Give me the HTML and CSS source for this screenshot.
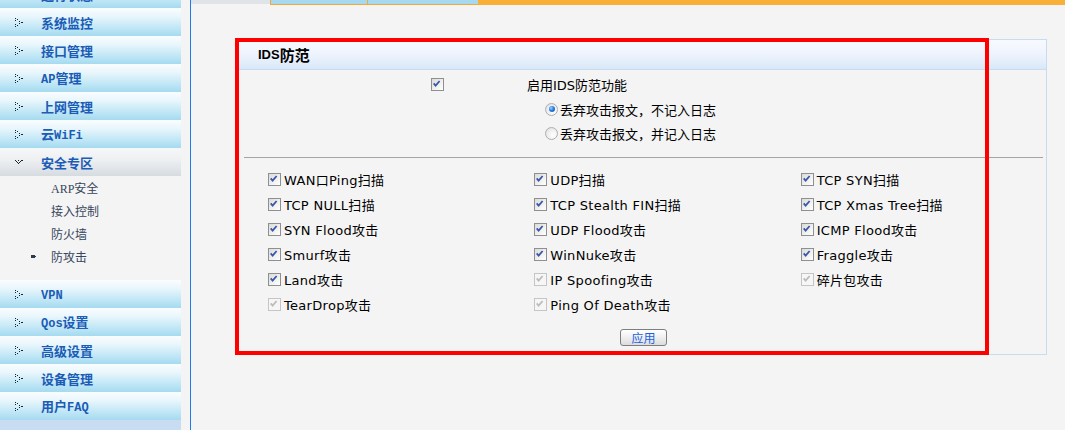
FILE: index.html
```html
<!DOCTYPE html>
<html lang="zh-CN">
<head>
<meta charset="utf-8">
<title>IDS防范</title>
<link rel="stylesheet" href="styles.css">
</head>
<body>
<div class="page">
  <aside class="side">
    <nav class="menu">
      <div class="item"><i class="ico"><svg width="9" height="9" viewBox="0 0 9 9"><g fill="#1d2230"><rect x="0" y="0" width="1" height="1"/><rect x="2" y="1" width="1" height="1"/><rect x="0" y="2" width="1" height="1"/><rect x="4" y="3" width="1" height="1"/><rect x="6" y="4" width="2" height="1"/><rect x="4" y="5" width="1" height="1"/><rect x="0" y="6" width="1" height="1"/><rect x="2" y="7" width="1" height="1"/><rect x="0" y="8" width="1" height="1"/></g></svg></i><span>运行状态</span></div>
      <div class="item"><i class="ico"><svg width="9" height="9" viewBox="0 0 9 9"><g fill="#1d2230"><rect x="0" y="0" width="1" height="1"/><rect x="2" y="1" width="1" height="1"/><rect x="0" y="2" width="1" height="1"/><rect x="4" y="3" width="1" height="1"/><rect x="6" y="4" width="2" height="1"/><rect x="4" y="5" width="1" height="1"/><rect x="0" y="6" width="1" height="1"/><rect x="2" y="7" width="1" height="1"/><rect x="0" y="8" width="1" height="1"/></g></svg></i><span>系统监控</span></div>
      <div class="item"><i class="ico"><svg width="9" height="9" viewBox="0 0 9 9"><g fill="#1d2230"><rect x="0" y="0" width="1" height="1"/><rect x="2" y="1" width="1" height="1"/><rect x="0" y="2" width="1" height="1"/><rect x="4" y="3" width="1" height="1"/><rect x="6" y="4" width="2" height="1"/><rect x="4" y="5" width="1" height="1"/><rect x="0" y="6" width="1" height="1"/><rect x="2" y="7" width="1" height="1"/><rect x="0" y="8" width="1" height="1"/></g></svg></i><span>接口管理</span></div>
      <div class="item"><i class="ico"><svg width="9" height="9" viewBox="0 0 9 9"><g fill="#1d2230"><rect x="0" y="0" width="1" height="1"/><rect x="2" y="1" width="1" height="1"/><rect x="0" y="2" width="1" height="1"/><rect x="4" y="3" width="1" height="1"/><rect x="6" y="4" width="2" height="1"/><rect x="4" y="5" width="1" height="1"/><rect x="0" y="6" width="1" height="1"/><rect x="2" y="7" width="1" height="1"/><rect x="0" y="8" width="1" height="1"/></g></svg></i><span><span class="en">AP</span>管理</span></div>
      <div class="item"><i class="ico"><svg width="9" height="9" viewBox="0 0 9 9"><g fill="#1d2230"><rect x="0" y="0" width="1" height="1"/><rect x="2" y="1" width="1" height="1"/><rect x="0" y="2" width="1" height="1"/><rect x="4" y="3" width="1" height="1"/><rect x="6" y="4" width="2" height="1"/><rect x="4" y="5" width="1" height="1"/><rect x="0" y="6" width="1" height="1"/><rect x="2" y="7" width="1" height="1"/><rect x="0" y="8" width="1" height="1"/></g></svg></i><span>上网管理</span></div>
      <div class="item"><i class="ico"><svg width="9" height="9" viewBox="0 0 9 9"><g fill="#1d2230"><rect x="0" y="0" width="1" height="1"/><rect x="2" y="1" width="1" height="1"/><rect x="0" y="2" width="1" height="1"/><rect x="4" y="3" width="1" height="1"/><rect x="6" y="4" width="2" height="1"/><rect x="4" y="5" width="1" height="1"/><rect x="0" y="6" width="1" height="1"/><rect x="2" y="7" width="1" height="1"/><rect x="0" y="8" width="1" height="1"/></g></svg></i><span>云<span class="en">WiFi</span></span></div>
      <div class="item active"><i class="ico"><svg width="9" height="5" viewBox="0 0 9 5"><g fill="#1d2230"><rect x="0" y="0" width="1" height="1"/><rect x="3" y="0" width="1" height="1"/><rect x="6" y="0" width="2" height="1"/><rect x="1" y="1" width="1" height="1"/><rect x="5" y="1" width="1" height="1"/><rect x="2" y="2" width="1" height="1"/><rect x="4" y="2" width="1" height="1"/><rect x="3" y="3" width="1" height="1"/></g></svg></i><span>安全专区</span></div>
      <ul class="sub">
        <li><i class="mk"></i><span><span class="sen">ARP</span>安全</span></li>
        <li><i class="mk"></i><span>接入控制</span></li>
        <li><i class="mk"></i><span>防火墙</span></li>
        <li class="cur"><i class="mk"><svg width="6" height="5" viewBox="0 0 6 5"><g fill="#2c3a52"><rect x="0" y="1" width="2" height="3"/><rect x="2" y="1" width="2" height="3"/><rect x="4" y="2" width="1" height="1"/></g></svg></i><span>防攻击</span></li>
      </ul>
      <div class="item"><i class="ico"><svg width="9" height="9" viewBox="0 0 9 9"><g fill="#1d2230"><rect x="0" y="0" width="1" height="1"/><rect x="2" y="1" width="1" height="1"/><rect x="0" y="2" width="1" height="1"/><rect x="4" y="3" width="1" height="1"/><rect x="6" y="4" width="2" height="1"/><rect x="4" y="5" width="1" height="1"/><rect x="0" y="6" width="1" height="1"/><rect x="2" y="7" width="1" height="1"/><rect x="0" y="8" width="1" height="1"/></g></svg></i><span><span class="en">VPN</span></span></div>
      <div class="item"><i class="ico"><svg width="9" height="9" viewBox="0 0 9 9"><g fill="#1d2230"><rect x="0" y="0" width="1" height="1"/><rect x="2" y="1" width="1" height="1"/><rect x="0" y="2" width="1" height="1"/><rect x="4" y="3" width="1" height="1"/><rect x="6" y="4" width="2" height="1"/><rect x="4" y="5" width="1" height="1"/><rect x="0" y="6" width="1" height="1"/><rect x="2" y="7" width="1" height="1"/><rect x="0" y="8" width="1" height="1"/></g></svg></i><span><span class="en">Qos</span>设置</span></div>
      <div class="item"><i class="ico"><svg width="9" height="9" viewBox="0 0 9 9"><g fill="#1d2230"><rect x="0" y="0" width="1" height="1"/><rect x="2" y="1" width="1" height="1"/><rect x="0" y="2" width="1" height="1"/><rect x="4" y="3" width="1" height="1"/><rect x="6" y="4" width="2" height="1"/><rect x="4" y="5" width="1" height="1"/><rect x="0" y="6" width="1" height="1"/><rect x="2" y="7" width="1" height="1"/><rect x="0" y="8" width="1" height="1"/></g></svg></i><span>高级设置</span></div>
      <div class="item"><i class="ico"><svg width="9" height="9" viewBox="0 0 9 9"><g fill="#1d2230"><rect x="0" y="0" width="1" height="1"/><rect x="2" y="1" width="1" height="1"/><rect x="0" y="2" width="1" height="1"/><rect x="4" y="3" width="1" height="1"/><rect x="6" y="4" width="2" height="1"/><rect x="4" y="5" width="1" height="1"/><rect x="0" y="6" width="1" height="1"/><rect x="2" y="7" width="1" height="1"/><rect x="0" y="8" width="1" height="1"/></g></svg></i><span>设备管理</span></div>
      <div class="item"><i class="ico"><svg width="9" height="9" viewBox="0 0 9 9"><g fill="#1d2230"><rect x="0" y="0" width="1" height="1"/><rect x="2" y="1" width="1" height="1"/><rect x="0" y="2" width="1" height="1"/><rect x="4" y="3" width="1" height="1"/><rect x="6" y="4" width="2" height="1"/><rect x="4" y="5" width="1" height="1"/><rect x="0" y="6" width="1" height="1"/><rect x="2" y="7" width="1" height="1"/><rect x="0" y="8" width="1" height="1"/></g></svg></i><span>用户<span class="en">FAQ</span></span></div>
    </nav>
  </aside>

  <main class="main">
    <div class="tabs">
      <span class="tab-gap"></span>
      <span class="tab t1"></span>
      <span class="tab t2"></span>
      <span class="tab-rest"></span>
    </div>

    <section class="panel">
      <header class="panel-head"><span class="head-en">IDS</span>防范</header>
      <div class="panel-body">
        <div class="enable-row">
          <span class="cb"><svg viewBox="0 0 13 13"><path d="M3 6.2 5.3 8.8 10 3.4"/></svg></span>
          <span class="enable-label">启用IDS防范功能</span>
        </div>
        <div class="radio-row"><span class="rd on"></span><span>丢弃攻击报文，不记入日志</span></div>
        <div class="radio-row"><span class="rd"></span><span>丢弃攻击报文，并记入日志</span></div>

        <hr class="sep">

        <div class="grid">
          <label class="opt"><span class="cb"><svg viewBox="0 0 13 13"><path d="M3 6.2 5.3 8.8 10 3.4"/></svg></span>WAN口Ping扫描</label>
          <label class="opt"><span class="cb"><svg viewBox="0 0 13 13"><path d="M3 6.2 5.3 8.8 10 3.4"/></svg></span>UDP扫描</label>
          <label class="opt"><span class="cb"><svg viewBox="0 0 13 13"><path d="M3 6.2 5.3 8.8 10 3.4"/></svg></span>TCP SYN扫描</label>

          <label class="opt"><span class="cb"><svg viewBox="0 0 13 13"><path d="M3 6.2 5.3 8.8 10 3.4"/></svg></span>TCP NULL扫描</label>
          <label class="opt"><span class="cb"><svg viewBox="0 0 13 13"><path d="M3 6.2 5.3 8.8 10 3.4"/></svg></span>TCP Stealth FIN扫描</label>
          <label class="opt"><span class="cb"><svg viewBox="0 0 13 13"><path d="M3 6.2 5.3 8.8 10 3.4"/></svg></span>TCP Xmas Tree扫描</label>

          <label class="opt"><span class="cb"><svg viewBox="0 0 13 13"><path d="M3 6.2 5.3 8.8 10 3.4"/></svg></span>SYN Flood攻击</label>
          <label class="opt"><span class="cb"><svg viewBox="0 0 13 13"><path d="M3 6.2 5.3 8.8 10 3.4"/></svg></span>UDP Flood攻击</label>
          <label class="opt"><span class="cb"><svg viewBox="0 0 13 13"><path d="M3 6.2 5.3 8.8 10 3.4"/></svg></span>ICMP Flood攻击</label>

          <label class="opt"><span class="cb"><svg viewBox="0 0 13 13"><path d="M3 6.2 5.3 8.8 10 3.4"/></svg></span>Smurf攻击</label>
          <label class="opt"><span class="cb"><svg viewBox="0 0 13 13"><path d="M3 6.2 5.3 8.8 10 3.4"/></svg></span>WinNuke攻击</label>
          <label class="opt"><span class="cb"><svg viewBox="0 0 13 13"><path d="M3 6.2 5.3 8.8 10 3.4"/></svg></span>Fraggle攻击</label>

          <label class="opt"><span class="cb"><svg viewBox="0 0 13 13"><path d="M3 6.2 5.3 8.8 10 3.4"/></svg></span>Land攻击</label>
          <label class="opt"><span class="cb dis"><svg viewBox="0 0 13 13"><path d="M3 6.2 5.3 8.8 10 3.4"/></svg></span>IP Spoofing攻击</label>
          <label class="opt"><span class="cb dis"><svg viewBox="0 0 13 13"><path d="M3 6.2 5.3 8.8 10 3.4"/></svg></span>碎片包攻击</label>

          <label class="opt"><span class="cb dis"><svg viewBox="0 0 13 13"><path d="M3 6.2 5.3 8.8 10 3.4"/></svg></span>TearDrop攻击</label>
          <label class="opt"><span class="cb dis"><svg viewBox="0 0 13 13"><path d="M3 6.2 5.3 8.8 10 3.4"/></svg></span>Ping Of Death攻击</label>
        </div>

        <div class="actions"><button class="btn" type="button">应用</button></div>
      </div>
    </section>

    <div class="mark"></div>
  </main>
</div>
</body>
</html>
```

FILE: styles.css
```css
* { box-sizing: border-box; }

html, body {
  margin: 0;
  padding: 0;
  height: 100%;
  overflow: hidden;
  background: #f4f4f4;
}

.page {
  display: flex;
  height: 100%;
}

/* ---------- sidebar ---------- */
.side {
  width: 191px;
  flex: none;
  border-right: 1px solid #1a7cf2;
  background: #f4f4f4;
}

.menu {
  width: 181px;
  margin-top: -20px;
  height: calc(100% + 20px);
  background: #c8ddf1;
  font: bold 13px "Noto Sans CJK SC", sans-serif;
  color: #1a5cb6;
}

.item {
  height: 28px;
  display: flex;
  align-items: center;
  background: linear-gradient(#fafdff 0%, #e9f6fc 30%, #c6e9f7 65%, #a5daf0 100%);
  line-height: 1;
}

.item.active {
  background: linear-gradient(#f6f7f8 0%, #eef0f2 40%, #dfe3e7 80%, #d6dbe0 100%);
}

.ico {
  width: 26px;
  margin-left: 15px;
  display: flex;
  align-items: center;
}

.ico svg { display: block; }

.en {
  font-family: "Liberation Mono", monospace;
  font-size: 12px;
  font-weight: bold;
}

.sub {
  list-style: none;
  margin: 0;
  padding: 0 0 12px;
  background: #f4f4f4;
  font: 12px "Noto Sans CJK SC", sans-serif;
  color: #36465c;
}

.sub li {
  height: 23px;
  display: flex;
  align-items: center;
  padding-left: 31px;
}

.mk {
  width: 20px;
  display: flex;
  align-items: center;
}

.sen {
  font-family: "Liberation Serif", serif;
  font-size: 12px;
}

/* ---------- main ---------- */
.main {
  flex: 1;
  position: relative;
  background: #f4f4f4;
  display: flex;
  flex-direction: column;
  align-items: flex-start;
}

.tabs {
  display: flex;
  width: 100%;
  height: 5px;
  align-items: flex-start;
}

.tab-gap {
  width: 79px;
  height: 4px;
  background: #e0e4e8;
}

.tab {
  height: 5px;
  background: #a6d9ee;
  border-left: 1px solid #f3a93a;
  border-bottom: 1px solid #f3a93a;
}

.t1 { width: 97px; }
.t2 { width: 111px; }

.tab-rest {
  flex: 1;
  height: 5px;
  background: #f8b038;
}

.panel {
  margin: 34px 0 0 45px;
  width: 811px;
  border: 1px solid #c6dcf1;
  background: #f4f4f4;
}

.panel-head {
  height: 30px;
  border-bottom: 1px solid #c6dcf1;
  background: linear-gradient(#f8faff 0%, #eff4fd 45%, #e2edfa 80%, #d8e7f8 100%);
  padding-left: 21px;
  display: flex;
  align-items: center;
  font: bold 15px "Noto Sans CJK SC", sans-serif;
  color: #000;
}

.head-en {
  font: bold 13px "Liberation Sans", sans-serif;
}

.panel-body {
  padding: 2px 3px 8px 7px;
  font: 13px "DejaVu Sans", "Noto Sans CJK SC", sans-serif;
  letter-spacing: 0.3px;
  color: #000;
}

.enable-row {
  height: 25px;
  display: flex;
  align-items: center;
  padding-left: 187px;
}

.enable-label { margin-left: 83px; letter-spacing: 0; }

.radio-row {
  height: 24px;
  display: flex;
  align-items: center;
  padding-left: 301px;
  gap: 2px;
  letter-spacing: 0;
}

.sep {
  margin: 12px 0 0;
  border: 0;
  height: 1px;
  background: #a4a4a4;
}

.grid {
  margin-top: 9px;
  display: grid;
  grid-template-columns: repeat(3, 1fr);
  grid-auto-rows: 25px;
}

.opt {
  display: flex;
  align-items: center;
  padding-left: 24px;
  gap: 3px;
  white-space: nowrap;
}

/* checkbox */
.cb {
  width: 13px;
  height: 13px;
  flex: none;
  border: 1px solid #8e8f92;
  background: linear-gradient(135deg, #dcdcd6 0%, #f2f2ee 60%, #ffffff 100%);
  display: block;
}

.cb svg {
  display: block;
  width: 11px;
  height: 11px;
  margin: 0;
}

.cb path {
  fill: none;
  stroke: #3a55b0;
  stroke-width: 2.1;
  transform: translate(-1px, -1px);
}

.cb.dis {
  border-color: #c5c5c5;
  background: #f6f6f6;
}

.cb.dis path { stroke: #bcbcbc; }

/* radio */
.rd {
  width: 13px;
  height: 13px;
  flex: none;
  border-radius: 50%;
  border: 1px solid #a9b0b8;
  background: radial-gradient(circle at 65% 65%, #ffffff 0%, #eeeeee 55%, #d8d8d8 100%);
  display: flex;
  align-items: center;
  justify-content: center;
}

.rd.on::after {
  content: "";
  width: 6px;
  height: 6px;
  border-radius: 50%;
  background: radial-gradient(circle at 35% 35%, #9fd4ff 0%, #2a7ee0 45%, #0c4fae 100%);
}

.actions {
  margin-top: 12px;
  display: flex;
  justify-content: center;
}

.btn {
  width: 47px;
  height: 17px;
  padding: 0;
  border: 1px solid #7e7e7e;
  border-radius: 3px;
  background: linear-gradient(#ffffff 0%, #f1f1f1 45%, #dcdcdc 100%);
  color: #1a63e2;
  font: 12px "Noto Sans CJK SC", sans-serif;
  letter-spacing: 0;
  line-height: 15px;
}

/* annotation overlay */
.mark {
  position: absolute;
  left: 44px;
  top: 38px;
  width: 754px;
  height: 317px;
  border: 4px solid #ff0000;
  pointer-events: none;
}
```
